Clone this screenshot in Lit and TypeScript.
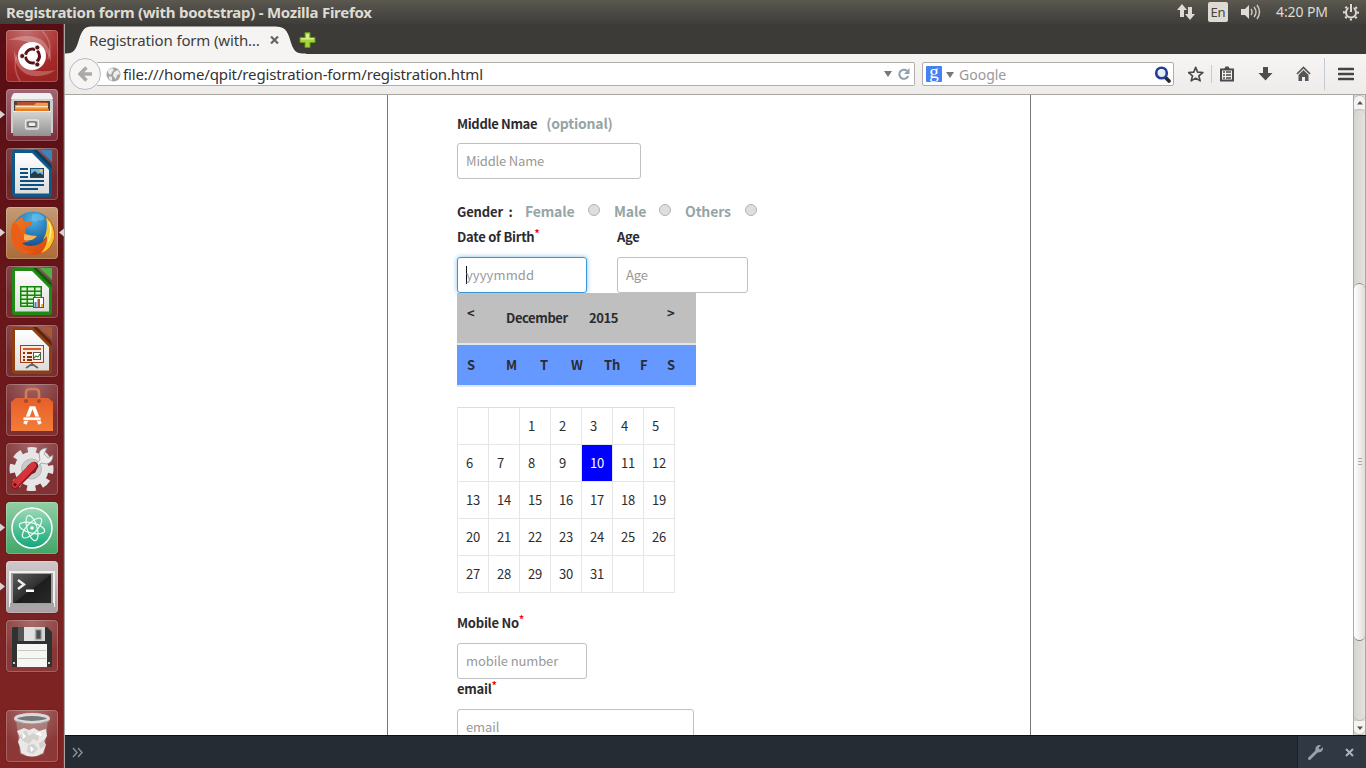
import { LitElement, html, css, svg } from "lit";
import { customElement } from "lit/decorators.js";
import { classMap } from "lit/directives/class-map.js";

const writerDoc = (edge: string, dark: string, fold: string, body: unknown) => svg`
  <path d="M6 5q0-3 3-3h20l17 17v27q0 3-3 3H9q-3 0-3-3z" fill="${edge}"/>
  <path d="M9 5h17L43 22v23.500H9z" fill="url(#paper)"/>
  <path d="M27 2l19 19-1-5L31 2z" fill="${dark}"/>
  <path d="M34 2h11q1 0 1 1v11z" fill="${fold}"/>${body}`;

const paper = svg`<defs>
  <linearGradient id="paper" x1="0" y1="0" x2="0" y2="1"><stop offset="0" stop-color="#fff"/><stop offset="1" stop-color="#dcdcdc"/></linearGradient>
  <linearGradient id="steel" x1="0" y1="0" x2="0" y2="1"><stop offset="0" stop-color="#d6d6d4"/><stop offset="1" stop-color="#91918f"/></linearGradient>
  <linearGradient id="bag" x1="0" y1="0" x2="0" y2="1"><stop offset="0" stop-color="#e9622a"/><stop offset="1" stop-color="#f27d38"/></linearGradient>
  <linearGradient id="fox" x1="0" y1="0" x2="1" y2="1"><stop offset="0" stop-color="#f07a22"/><stop offset="1" stop-color="#d5430c"/></linearGradient>
  <radialGradient id="globe" cx=".5" cy=".2" r=".8"><stop offset="0" stop-color="#4bb4ea"/><stop offset="1" stop-color="#0b3777"/></radialGradient>
  <linearGradient id="atom" x1="0" y1="0" x2="0" y2="1"><stop offset="0" stop-color="#9dd9b6"/><stop offset="1" stop-color="#12a77a"/></linearGradient>
  <linearGradient id="term" x1="0" y1="0" x2="1" y2="1"><stop offset="0" stop-color="#5a5a5a"/><stop offset=".5" stop-color="#303030"/><stop offset=".52" stop-color="#1d1d1d"/><stop offset="1" stop-color="#292929"/></linearGradient>
</defs>`;

const icons: Record<string, unknown> = {
  dash: svg`
    <path d="M2 10Q22 2 36 10q10 8 9 22-3-12-15-17Q16 9 2 10z" fill="#fff" opacity=".25"/>
    <path d="M50 40q-16 10-30 4Q7 36 8 20q3 13 14 19 12 4 28 1z" fill="#fff" opacity=".25"/>
    <path d="M36 1q12 12 6 28M14 51Q6 38 11 25" fill="none" stroke="#fff" stroke-opacity=".22" stroke-width="1.500"/>
    <circle cx="26" cy="26" r="14" fill="#fff"/>
    <circle cx="26.500" cy="26" r="7" fill="none" stroke="#5a1218" stroke-width="3" stroke-dasharray="12.700 2" stroke-dashoffset="6.300"/>
    <g fill="#5a1218" stroke="#fff" stroke-width=".8"><circle cx="16.200" cy="26" r="2.500"/><circle cx="31.300" cy="17.500" r="2.500"/><circle cx="31.300" cy="34.500" r="2.500"/></g>`,
  files: svg`
    <path d="M9 4h34q2 0 3 3l1 6v31H5V13l1-6q1-3 3-3z" fill="#cfcfcd"/><path d="M9 4h34q2 0 3 3l1 3H5l1-3q1-3 3-3z" fill="#f0f0ee"/>
    <rect x="8" y="12" width="36" height="12" fill="#494340"/>
    <path d="M11 13h30v4H11z" fill="#b4502d"/><path d="M9 16h19l2-2h12v8H9z" fill="#f49a45"/><path d="M10 17h32v1.300H10z" fill="#ffe6c0"/><path d="M9 20h34v3H9z" fill="#e97a1f"/>
    <path d="M7 22h38v24q0 1-1 1H8q-1 0-1-1z" fill="url(#steel)"/><path d="M7 22h38v1H7z" fill="#eee"/>
    <rect x="19.500" y="31" width="13" height="9" rx="1.500" fill="#b3b3b1" stroke="#e8e8e8" stroke-width="1.300"/><rect x="22" y="33" width="8" height="4.500" rx="1" fill="#eee" stroke="#555" stroke-width="1.200"/>`,
  writer: writerDoc("#0f5887", "#0b3d60", "#3b87b9", svg`
    <g fill="#0f4f7c"><path d="M14 20h8v2h-8zm0 4h8v2h-8zm0 4h8v2h-8zm0 4h24v2H14zm0 4h24v2H14zm0 4h18v2H14z"/></g>
    <rect x="24.500" y="20.500" width="13" height="9" fill="#76b5dc" stroke="#114a72"/><path d="M25 29v-3l4-3 3 3 2-1 3 2v2z" fill="#243b45"/><circle cx="35" cy="22.500" r="1.500" fill="#f3cf35"/>`),
  firefox: svg`
    <circle cx="27" cy="25" r="20.500" fill="url(#globe)"/><path d="M26 7q8-2 13 4l-3 3-3-1-3 2-4-2z" fill="#76caec" opacity=".5"/>
    <path d="M41 10q9 8 8 20-3 17-22 18Q6 47 5 27q-1-8 3-14l1 3q3-5 8-6-1 3 1 4h6q4 1 1 4l-5 3-1 4q3 5 8 3-6 7-14 2 2 9 12 9 13-1 16-11l-3 2q5-6 4-13z" fill="url(#fox)"/>
    <path d="M40 10q9 9 8 21-3 12-13 15 7-8 6-17l-4 4q6-10 3-23z" fill="#f8c52d"/><path d="M43 15q4 10-1 20" fill="none" stroke="#fff29a" stroke-width="1.500"/>
    <path d="M7 16q5 0 7 7t9 12q-8 0-9 4 5 6 16 6Q13 50 7 37 3 27 7 16z" fill="#e95f18"/><path d="M18 27q7 2 13 2-5 6-13 4z" fill="#ffb359"/>`,
  calc: writerDoc("#1f8b13", "#125a0c", "#4bb345", svg`
    <rect x="14" y="20" width="22" height="21" fill="#17840f"/><g fill="#d9f3ce"><path d="M15.500 21.500h5v3h-5zm6.500 0h6v3h-6zm7.500 0h5v3h-5zM15.500 26h5v2.500h-5zm6.500 0h6v2.500h-6zm7.500 0h5v2.500h-5zm-14 4h5v2.500h-5zm6.500 0h6v2.500h-6zm7.500 0h5v2.500h-5zM15.500 34h5v2.500h-5zm6.500 0h6v2.500h-6zM15.500 38h5v1.500h-5zm6.500 0h6v1.500h-6z"/></g>
    <rect x="27.500" y="31.500" width="10" height="10" fill="#fff" stroke="#555"/><path d="M28.500 36h2v5h-2z" fill="#3087cc"/><path d="M31.500 33h2.500v8h-2.500z" fill="#b3532c"/><path d="M35 38h2v3h-2z" fill="#e8b530"/>`),
  impress: writerDoc("#8f3f10", "#5f2505", "#a85a34", svg`
    <rect x="14.500" y="20.500" width="23" height="17" fill="#fbe9e1" stroke="#a63b17"/><path d="M17 23h18v2H17z" fill="#cf602e"/>
    <path d="M17 27h2v2h-2zm0 4h2v2h-2zm0 3h2v2h-2zM21 27h5v2h-5zm0 4h5v2h-5zm0 3h5v2h-5z" fill="#87340f"/><rect x="27.500" y="27.500" width="7" height="7" fill="#fff" stroke="#555"/><path d="M28 33l2-2 2 1 2-3" stroke="#2c8c25" stroke-width="1.300" fill="none"/><path d="M26 38v3m0-2l-6 4m6-4l6 4" stroke="#666" stroke-width="2"/>`),
  software: svg`
    <path d="M9 14h34l4 6H5z" fill="#c44f25"/><path d="M5 18h42v29H5z" fill="url(#bag)"/><path d="M5 18l5-4h32l5 4z" fill="#e6622d"/>
    <path d="M20 17V9q0-4 4-4h5q4 0 4 4v8" fill="none" stroke="#d87857" stroke-width="2.600"/><circle cx="20" cy="17" r="2" fill="#b34421"/><circle cx="33" cy="17" r="2" fill="#b34421"/>
    <path d="M19 40l6-16h3l6 16" fill="none" stroke="#fff" stroke-width="3.600"/><rect x="17" y="33" width="18" height="3.400" rx="1" fill="#fff" stroke="#ee7136" stroke-width=".8"/>`,
  settings: svg`
    <circle cx="25.500" cy="26" r="18.500" fill="none" stroke="#e4e4e4" stroke-width="7" stroke-dasharray="8.500 6.030" stroke-dashoffset="4.250"/>
    <circle cx="25.500" cy="26" r="13.500" fill="#ddd" stroke="#e6e6e6" stroke-width="7"/><circle cx="25.500" cy="26" r="10" fill="#cacaca" stroke="#b8b8b8"/><circle cx="25.500" cy="26" r="5" fill="#681b24"/>
    <path d="M24 27l10-10-1-7q2-5 8-5l-3 6 4 4 5-3q0 7-6 9l-6-1-8 9z" fill="#ececec" stroke="#8e8e8e" stroke-width=".7"/>
    <path d="M9 42l19-19" stroke="#89191c" stroke-width="8.500" stroke-linecap="round"/><path d="M9 41.500l18-19" stroke="#d4343a" stroke-width="6.500" stroke-linecap="round"/><circle cx="9" cy="41.500" r="1.600" fill="#5a1014"/>`,
  atom: svg`
    <circle cx="26" cy="26" r="20" fill="url(#atom)" stroke="#fff" stroke-width="1.500"/>
    <g fill="none" stroke="#e9fff5" stroke-width="1.200"><ellipse cx="26" cy="26" rx="13" ry="5" transform="rotate(14 26 26)"/><ellipse cx="26" cy="26" rx="13" ry="5" transform="rotate(74 26 26)"/><ellipse cx="26" cy="26" rx="13" ry="5" transform="rotate(134 26 26)"/></g><circle cx="26" cy="26" r="1.800" fill="#fff"/>`,
  terminal: svg`
    <path d="M3 10h46v36H3z" fill="#f0f0f0"/><path d="M4 42h44v4H4z" fill="#a6a6a6"/><path d="M5 12h42v31H5z" fill="#9e9e9e"/><path d="M7 13h38v29H7z" fill="url(#term)"/>
    <path d="M12 19l6 4.500-6 4.500" fill="none" stroke="#eee" stroke-width="2.400"/><path d="M20 28.500h8v2.400h-8z" fill="#fff"/>`,
  floppy: svg`
    <path d="M7 7h34l5 5v35H6V8z" fill="#303232"/><path d="M12 7h6v14h-6z" fill="#555"/><path d="M18 7h21v14H18z" fill="#d2d3d3"/><path d="M18 7h10v14H18z" fill="#f0f0f0" opacity=".5"/><rect x="30" y="10" width="5" height="9" fill="#4c4e50" stroke="#888"/>
    <path d="M11 24h30v23H11z" fill="#f6f6f4"/><path d="M12 30.500h28m-28 8h28" stroke="#c9c9bf"/><path d="M7 42h2v2H7zm35 0h2v2h-2z" fill="#ccc"/>`,
  trash: svg`
    <path d="M10 10h32l-4 34q-12 6-24 0z" fill="#dedede" opacity=".3"/>
    <path d="M11 21l7-3 5 2 5-2 5 3 7-2 1 7-3 5 2 4-3 8q-11 7-22 0l-1-6-2-5 2-5z" fill="#e9e8e6"/>
    <path d="M20 20l3 6 4-3 6 3-1 5-5-2-4 5-6-3-4-5zM22 35l6-1 4 5-5 5-6-2zM33 33l5-3 1 6-5 3z" fill="#d3d1ce"/>
    <path d="M16 22l4 4-3 3zM29 24l5-2 2 4zM24 36l4 3-3 3z" fill="#fff"/>
    <ellipse cx="26" cy="8.500" rx="16.500" ry="4" fill="#777" stroke="#dadada" stroke-width="3"/><path d="M9 11q17 6 34 0" fill="none" stroke="#999" stroke-width="1.200"/>`,
};

const launchers = [
  { id: "dash" }, { id: "files", left: true }, { id: "writer" }, { id: "firefox", left: true, right: true },
  { id: "calc" }, { id: "impress" }, { id: "software" }, { id: "settings" }, { id: "atom", left: true },
  { id: "terminal", left: true }, { id: "floppy" }, { id: "trash" },
] as { id: string; left?: boolean; right?: boolean }[];

@customElement("unity-launcher")
class UnityLauncher extends LitElement {
  static styles = css`
    :host { display: flex; flex-direction: column; width: 64px; padding-top: 6px; box-sizing: border-box; border-right: 1px solid #80373a;
      background: linear-gradient(#570e13, #671519 35%, #7b2222 80%, #802423); }
    .slot { height: 59px; display: grid; grid-template-columns: 6px 52px 6px; align-items: start; }
    .slot.trash { margin-top: 31px; height: 52px; }
    .tile { position: relative; width: 52px; height: 52px; border-radius: 4px; box-sizing: border-box; overflow: hidden;
      background: radial-gradient(circle at 50% 0, #ffffff55, #ffffff18 65%); box-shadow: inset 0 0 0 1px #ffffff38, 0 0 1px #300; }
    .tile.dash { background: radial-gradient(circle at 40% 0, #c46f70, #a42826 65%, #922321); }
    .tile.files { background: linear-gradient(#a06673, #7d2d3b); }
    .tile.firefox { background: linear-gradient(#c49b77, #aa6b38); }
    .tile.atom { background: linear-gradient(#91cfa4, #41a568); }
    .tile.terminal { background: linear-gradient(#cfc8ca, #aaa0a4); }
    .tile svg { display: block; }
    .mark { height: 52px; display: block; }
  `;
  render() {
    return launchers.map((l) => html`<div class=${classMap({ slot: true, trash: l.id === "trash" })}>
      <svg class="mark" width="6" height="52">${l.left ? svg`<path d="M0 21.500v8l5-4z" fill="#d8d2d3"/>` : ""}</svg>
      <div class=${"tile " + l.id}><svg width="52" height="52" viewBox="0 0 52 52">${paper}${icons[l.id]}</svg></div>
      <svg class="mark" width="6" height="52">${l.right ? svg`<path d="M6 21.500v8l-5-4z" fill="#d8d2d3"/>` : ""}</svg>
    </div>`);
  }
}

@customElement("registration-page")
class RegistrationPage extends LitElement {
  static styles = css`
    :host { display: flex; height: 640px; overflow: hidden; background: #fff; color: #2c2c30; font: 13px/20px "Noto Sans CJK SC", "Noto Sans", sans-serif; }
    .viewport { flex: 1; padding-left: 322px; }
    .frame { width: 642px; height: 640px; box-sizing: content-box; border: 1px solid #777; border-width: 0 1px; overflow: hidden; }
    .form { padding: 18px 0 0 69px; }
    .label { font-weight: 700; height: 20px; display: flex; white-space: pre; letter-spacing: -0.24px; }
    .first { align-items: baseline; letter-spacing: -0.34px; }
    .muted { color: #95a5a6; font-size: 14px; font-weight: 700; letter-spacing: -0.15px; }
    .optional { margin-left: 9px; letter-spacing: -0.2px; }
    .star { color: #f00; font-size: 10px; line-height: 12px; font-weight: 700; }
    .input { height: 36px; box-sizing: border-box; border: 1px solid #bdc0c4; border-radius: 3px; padding: 7px 8px; color: #999; letter-spacing: -0.1px; white-space: nowrap; }
    .w184 { width: 184px; letter-spacing: -0.18px; } .w130 { width: 130px; } .w131 { width: 131px; } .w237 { width: 237px; }
    .gap { margin-top: 10px; }
    .gender { display: grid; grid-template-columns: 68px 63px 26px 45px 26px 60px 14px; margin-top: 23px; height: 20px; font-weight: 700; white-space: pre; letter-spacing: -0.15px; }
    .gender .muted { line-height: 18px; }
    .radio { width: 10px; height: 10px; margin-top: 2px; border: 1px solid #b5b4b2; border-radius: 50%; background: #dfdedc; }
    .pair { display: grid; grid-template-columns: 160px 131px; margin-top: 5px; }
    .focus { border-color: #3498db; box-shadow: 0 0 5px #3498db99; display: flex; letter-spacing: 0.1px; }
    .caret { width: 1px; height: 18px; margin-top: 1px; margin-right: -1px; background: #111; }
    .month, .days { width: 239px; box-sizing: border-box; padding-left: 10px; display: grid; font-weight: 700; position: relative; letter-spacing: -0.1px; }
    .month { height: 50px; grid-template-columns: 39px 83px 78px 20px; background: #bfbfbf; padding-top: 15px; letter-spacing: -0.4px; }
    .arrow { margin-top: -5px; }
    .days { height: 40px; grid-template-columns: 39px 34px 31px 33px 36px 27px 20px; background: #69f; padding-top: 10px; }
    .rule { width: 239px; height: 2px; background: #e3e6e6; }
    .dates { margin-top: 20px; width: 218px; height: 186px; box-sizing: border-box; display: grid; grid-template-columns: repeat(7, 31px); grid-auto-rows: 37px; border-left: 1px solid #e4e7e7; border-top: 1px solid #dcdede; }
    .date { border: 1px solid #e4e7e7; border-width: 0 1px 1px 0; box-sizing: border-box; padding: 8px 0 0 8px; letter-spacing: -0.25px; }
    .today { background: #00f; color: #fff; }
    .mobile { margin-top: 20px; }
    .bar { width: 13px; box-sizing: border-box; display: flex; flex-direction: column; border: 1px solid #aaa7a2; border-width: 0 1px; background: linear-gradient(90deg, #d5d4d1, #e3e2e0); }
    .cap { height: 14px; border-radius: 6px 6px 0 0; background: #f5f4f3; border: 1px solid #bbb8b4; border-width: 1px 0 0; box-sizing: border-box; display: flex; align-items: center; justify-content: center; }
    .cap.end { border-radius: 0 0 6px 6px; border-width: 0 0 1px; }
    .before { height: 174px; border-radius: 6px 6px 0 0; border-top: 1px solid #bbb8b4; box-sizing: border-box; }
    .thumb { height: 358px; box-sizing: border-box; border: 1px solid #8a8782; border-width: 1px 0; border-radius: 6px; background: linear-gradient(90deg, #fff, #dfdedb); display: flex; align-items: center; justify-content: center; }
    .after { flex: 1; border-bottom: 1px solid #bbb8b4; border-radius: 0 0 6px 6px; }
  `;
  render() {
    const cells = ["", "", ...Array.from({ length: 31 }, (_, i) => String(i + 1)), "", ""];
    return html`
      <div class="viewport"><div class="frame"><div class="form">
        <div class="label first">Middle Nmae<span class="muted optional">(optional)</span></div>
        <div class="input w184 gap">Middle Name</div>
        <div class="gender"><span>Gender  :</span>
          <span class="muted">Female</span><span class="radio"></span>
          <span class="muted">Male</span><span class="radio"></span>
          <span class="muted">Others</span><span class="radio"></span></div>
        <div class="pair">
          <div><div class="label">Date of Birth<span class="star">*</span></div><div class="input w130 gap focus"><span class="caret"></span>yyyymmdd</div></div>
          <div><div class="label">Age</div><div class="input w131 gap">Age</div></div>
        </div>
        <div class="month"><span class="arrow">&lt;</span><span>December</span><span>2015</span><span class="arrow">&gt;</span></div>
        <div class="rule"></div>
        <div class="days">${["S", "M", "T", "W", "Th", "F", "S"].map((d) => html`<span>${d}</span>`)}</div>
        <div class="rule"></div>
        <div class="dates">${cells.map((c) => html`<span class=${classMap({ date: true, today: c === "10" })}>${c}</span>`)}</div>
        <div class="label mobile">Mobile No<span class="star">*</span></div>
        <div class="input w130 gap">mobile number</div>
        <div class="label">email<span class="star">*</span></div>
        <div class="input w237 gap">email</div>
      </div></div></div>
      <div class="bar">
        <div class="cap"><svg width="6" height="4"><path d="M0 3.500L3 0l3 3.500z" fill="#555"/></svg></div>
        <div class="before"></div>
        <div class="thumb"><svg width="4" height="8"><path d="M0 .5h4M0 3.500h4M0 6.500h4" stroke="#aaa"/></svg></div>
        <div class="after"></div>
        <div class="cap end"><svg width="6" height="4"><path d="M0 .5L3 4l3-3.500z" fill="#555"/></svg></div>
      </div>`;
  }
}

@customElement("app-root")
class AppRoot extends LitElement {
  static styles = css`
    :host { display: block; width: 1366px; height: 768px; overflow: hidden; font-family: "Noto Sans", sans-serif; color: #3d3d3d; }
    svg { display: block; }
    .panel { height: 24px; display: flex; align-items: center; background: linear-gradient(#5c5a4e, #55534c 15%, #3f3e3a); color: #dfdbd2; padding: 0 5px 0 6px; box-sizing: border-box; line-height: 24px; white-space: nowrap; }
    .title { flex: 1; font-weight: 700; font-size: 15px; letter-spacing: -0.26px; }
    .tray { display: grid; grid-template-columns: 31px 33px 35px 66px 19px; align-items: center; font-size: 14px; letter-spacing: -0.1px; }
    .lang { width: 20px; height: 20px; border-radius: 2px; background: #dfdbd2; color: #454440; font-size: 13px; line-height: 20px; text-align: center; }
    .desktop { display: grid; grid-template-columns: 64px 1302px; height: 744px; }
    .window { display: flex; flex-direction: column; border-left: 1px solid #aaa5a1; box-sizing: border-box; background: #fff; }
    .tabs { height: 30px; background: #3c3b37; display: grid; }
    .tabs > * { grid-area: 1 / 1; }
    .tabline { display: flex; align-items: center; padding: 2px 0 0 24px; height: 28px; box-sizing: content-box; }
    .tabtext { font-size: 15px; line-height: 24px; letter-spacing: -0.15px; width: 181px; white-space: nowrap; }
    .close { width: 29px; }
    .toolbar { height: 41px; box-sizing: border-box; border-bottom: 1px solid #aaa6a0; background: linear-gradient(#f6f5f4, #edecea); display: flex; align-items: center; padding-left: 4px; }
    .back { width: 32px; height: 32px; border-radius: 50%; box-sizing: border-box; border: 1px solid #b5bac0; background: #f6f5f4; display: grid; place-items: center; z-index: 1; }
    .url { width: 818px; margin-left: -4px; height: 24px; box-sizing: border-box; border: 1px solid #b1aea9; border-left: 0; border-radius: 0 2px 2px 0; background: #fff; display: flex; align-items: center; padding: 0 4px 0 9px; font-size: 15px; line-height: 22px; color: #333; }
    .address { flex: 1; margin-left: 2px; letter-spacing: -0.14px; }
    .reload { margin-left: 6px; }
    .search { width: 252px; margin-left: 7px; height: 24px; box-sizing: border-box; border: 1px solid #b1aea9; border-radius: 2px; background: #fff; display: flex; align-items: center; padding: 0 2px 0 3px; font-size: 14px; color: #999; }
    .g { width: 16px; height: 16px; border-radius: 1px; background: #4580f5; color: #fff; font: 19px/11px "Liberation Serif", serif; text-align: center; }
    .arrow { margin: 1px 5px 0 4px; }
    .hint { flex: 1; letter-spacing: 0; }
    .tools { display: grid; grid-template-columns: 31px 39px 38px 42px 22px; align-items: center; margin-left: 14px; }
    .star { border-right: 1px solid #c4cad0; width: 23px; }
    .menu { height: 32px; margin-left: -14px; padding-left: 13px; border-left: 1px solid #c4cad0; display: flex; align-items: center; }
    .devbar { height: 33px; box-sizing: border-box; border-top: 1px solid #0e1114; background: #252c33; display: flex; justify-content: space-between; }
    .prompt { padding: 11px 0 0 7px; }
    .devtools { width: 69px; background: #303843; border-left: 1px solid #1b2127; display: flex; align-items: center; padding-left: 10px; gap: 21px; box-sizing: border-box; }
  `;
  render() {
    const triangle = html`<svg width="8" height="6"><path d="M0 0h8L4 6z" fill="#777"/></svg>`;
    return html`
      <div class="panel"><span class="title">Registration form (with bootstrap) - Mozilla Firefox</span>
        <div class="tray">
          <svg width="18" height="18"><path d="M5 1l5 6H7v7H3V7H0z" fill="#dfdbd2"/><path d="M13 17l-5-6h3V4h4v7h3z" fill="#dfdbd2"/></svg>
          <span class="lang">En</span>
          <svg width="20" height="18"><path d="M0 6h4l4-4v14l-4-4H0z" fill="#dfdbd2"/><path d="M10 6q2 3 0 6M13 4q4 5 0 10M16 2q5 7 0 14" fill="none" stroke="#c9c5bb" stroke-width="1.500"/></svg>
          <span>4:20 PM</span>
          <svg width="18" height="18"><circle cx="9" cy="9.500" r="5" fill="none" stroke="#dfdbd2" stroke-width="2"/><circle cx="9" cy="9.500" r="7" fill="none" stroke="#dfdbd2" stroke-width="2" stroke-dasharray="2.200 3.300" stroke-dashoffset="1.100"/><path d="M6.500 1h5v7h-5z" fill="#4b4a44"/><path d="M8 1h2v8H8z" fill="#dfdbd2"/></svg>
        </div>
      </div>
      <div class="desktop">
        <unity-launcher></unity-launcher>
        <div class="window">
          <div class="tabs">
            <svg width="241" height="30"><path d="M0 29.500h1c8 0 10-4 13-14C17 6 20 2.500 26 2.500h184c9 0 12 3 15 13s5 14 13 14h3V30H0z" fill="#f5f4f2"/></svg>
            <div class="tabline"><span class="tabtext">Registration form (with…</span>
              <svg class="close" width="29" height="8" viewBox="0 0 29 8"><path d="M1 0.500l7 7m0-7l-7 7" stroke="#666" stroke-width="2.200"/></svg>
              <svg width="18" height="16" viewBox="0 0 18 16"><path d="M6 .5h5v5h5v5h-5v5H6v-5H1v-5h5z" fill="#a9d43c" stroke="#5f9a12"/><path d="M7 2h3v4h5v1.500H2V6h5z" fill="#d5ef86"/></svg></div>
          </div>
          <div class="toolbar">
            <div class="back"><svg width="15" height="16"><path d="M14 8H3M8.500 1.500L2 8l6.500 6.500" fill="none" stroke="#aaa" stroke-width="3.600"/></svg></div>
            <div class="url"><svg width="15" height="15" viewBox="0 0 15 15"><circle cx="7.500" cy="7.500" r="7" fill="#a5a5a5"/><path d="M2 3l4-2 2 2-2 2-1 3-3-2zm6 2l4-2 2 4-3 1-1 4-3-3zM3 9l3 1v4l-3-2z" fill="#eee"/></svg>
              <span class="address">file:///home/qpit/registration-form/registration.html</span>${triangle}
              <svg class="reload" width="12" height="12"><path d="M9 2.800A4.600 4.600 0 1 0 10.200 8" fill="none" stroke="#8fa0ae" stroke-width="2"/><path d="M11.500 0v6H6z" fill="#8fa0ae"/></svg></div>
            <div class="search"><span class="g">g</span><span class="arrow">${triangle}</span><span class="hint">Google</span>
              <svg width="17" height="17"><path d="M11 11l4 4" stroke="#26262c" stroke-width="3.600" stroke-linecap="round"/><circle cx="7.500" cy="7" r="5.300" fill="#e4ecf9" stroke="#233e91" stroke-width="2.600"/><path d="M4.500 6q1-3 4-2.500" stroke="#fff" fill="none"/></svg></div>
            <div class="tools">
              <svg class="star" width="24" height="18" viewBox="0 0 24 18"><path d="M9 2l2 5 5.500.5-4.200 3.500 1.400 5.200L9 13.300l-4.700 2.900L5.700 11 1.500 7.500 7 7z" fill="none" stroke="#4a4a4a" stroke-width="1.700" stroke-linejoin="round" transform="translate(-1 0)"/></svg>
              <svg width="16" height="16"><path d="M2 3.500h12v11H2z" fill="none" stroke="#4a4a4a" stroke-width="2"/><path d="M4 3q2 0 2.500-2.500h3Q10 3 12 3z" fill="#4a4a4a"/><path d="M4 6h2m1 0h5M4 9h2m1 0h5M4 12h2m1 0h5" stroke="#4a4a4a" stroke-width="1.400"/></svg>
              <svg width="16" height="16"><path d="M5 1h5v6h4.500L7.500 14.500.5 7H5z" fill="#4d4d4d"/></svg>
              <svg width="16" height="16"><path d="M1 8l6.500-6.500L14 8" fill="none" stroke="#555" stroke-width="1.700"/><path d="M2.500 9l5-5 5 5v6H9v-4H6v4H2.500z" fill="#555"/></svg>
              <div class="menu"><svg width="16" height="14"><path d="M1 2h14M1 7h14M1 12h14" stroke="#444" stroke-width="2.600" stroke-linecap="round"/></svg></div>
            </div>
          </div>
          <registration-page></registration-page>
          <div class="devbar"><svg class="prompt" width="12" height="11"><path d="M1 1l4 4.500L1 10M6 1l4 4.500L6 10" fill="none" stroke="#8b939c" stroke-width="1.400"/></svg>
            <div class="devtools"><svg width="16" height="16"><path d="M1.500 14.500L9 7" stroke="#99a0a8" stroke-width="3" stroke-linecap="round"/><path d="M13 1.200L10.500 4l1.500 1.500L15 3q.5 5-4.500 5.500Q6.500 8 7.500 4 9 0 13 1.200z" fill="#99a0a8"/></svg>
              <svg width="9" height="9"><path d="M1 1l7 7m0-7L1 8" stroke="#aeb3b9" stroke-width="2"/></svg></div></div>
        </div>
      </div>`;
  }
}
